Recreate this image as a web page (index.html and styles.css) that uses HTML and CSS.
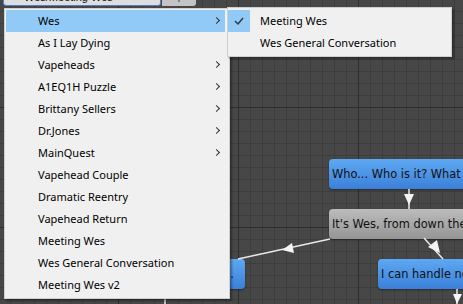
FILE: index.html
```html
<!DOCTYPE html>
<html lang="en">
<head>
    <meta charset="UTF-8">
    <title>Dialogue Graph</title>
    <link rel="stylesheet" href="styles.css">
</head>
<body>
    <div class="graph">
        <!-- nodes sit on the free canvas -->
        <div class="node node-blue" style="left: 329px; top: 159px; width: 240px;">Who... Who is it? What are you doing here?</div>
        <div class="node node-gray" style="left: 329px; top: 209px; width: 240px;">It's Wes, from down the hall.</div>
        <div class="node node-blue" style="left: 378px; top: 259px; width: 200px;">I can handle nothing.</div>
        <div class="node node-blue node-left" style="left: 110px; top: 259px; width: 135px;">Oh, hi Wes...</div>

        <svg class="edges" width="463" height="304" viewBox="0 0 463 304">
            <line x1="409" y1="189" x2="409" y2="209"/>
            <polygon points="404,194 414,194 409,205"/>
            <line x1="424" y1="238" x2="443" y2="259"/>
            <polygon points="428,247 437,240 440,253"/>
            <line x1="330" y1="239" x2="238" y2="259"/>
            <polygon points="292,243 294,253 282,250"/>
            <line x1="457" y1="289" x2="457" y2="304"/>
            <polygon points="453,294 462,294 457,304"/>
            <line x1="165" y1="296" x2="165" y2="304"/>
        </svg>

        <div class="toolbar">
            <div class="path-field">Wes/Meeting Wes <span class="caret">&#9662;</span></div>
            <div class="tool-btn">|</div>
        </div>

        <ul class="menu">
            <li class="menu-item active">Wes<span class="chev"></span></li>
            <li class="menu-item">As I Lay Dying</li>
            <li class="menu-item">Vapeheads<span class="chev"></span></li>
            <li class="menu-item">A1EQ1H Puzzle<span class="chev"></span></li>
            <li class="menu-item">Brittany Sellers<span class="chev"></span></li>
            <li class="menu-item">Dr.Jones<span class="chev"></span></li>
            <li class="menu-item">MainQuest<span class="chev"></span></li>
            <li class="menu-item">Vapehead Couple</li>
            <li class="menu-item">Dramatic Reentry</li>
            <li class="menu-item">Vapehead Return</li>
            <li class="menu-item">Meeting Wes</li>
            <li class="menu-item">Wes General Conversation</li>
            <li class="menu-item">Meeting Wes v2</li>
        </ul>

        <ul class="menu submenu">
            <li class="menu-item checked">
                <span class="check">
                    <svg width="22" height="22" viewBox="0 0 22 22"><path d="M7 11 L10 14 L15 8"/></svg>
                </span>
                Meeting Wes
            </li>
            <li class="menu-item">Wes General Conversation</li>
        </ul>
    </div>
</body>
</html>
```

FILE: styles.css
```css
body {
    margin: 0;
    padding: 0;
    overflow: hidden;
}
.graph {
    position: relative;
    width: 463px;
    height: 304px;
    overflow: hidden;
    background-color: #474747;
    background-image:
        linear-gradient(90deg, #2e2e2e 1px, transparent 1px),
        linear-gradient(0deg, #2e2e2e 1px, transparent 1px),
        linear-gradient(90deg, #3d3d3d 1px, transparent 1px),
        linear-gradient(0deg, #3d3d3d 1px, transparent 1px);
    background-size: 120px 120px, 120px 120px, 12px 12px, 12px 12px;
    background-position: 118px 0, 0 108px, 10px 0, 0 0;
    font-family: "DejaVu Sans", sans-serif;
}

/* graph nodes */
.node {
    position: absolute;
    height: 30px;
    box-sizing: border-box;
    padding: 0 3px;
    border-radius: 4px;
    font-size: 11.4px;
    line-height: 30px;
    color: #111;
    white-space: nowrap;
    overflow: hidden;
    box-shadow: 0 1px 2px rgba(0,0,0,0.4);
}
.node-blue {
    background: linear-gradient(#5ea8f2, #3b80d9);
}
.node-gray {
    background: linear-gradient(#bcbcbc, #959595);
}
.node-left {
    text-align: right;
    padding-right: 11px;
}
.edges {
    position: absolute;
    left: 0;
    top: 0;
}
.edges line {
    stroke: #e8e8e8;
    stroke-width: 1.5;
}
.edges polygon {
    fill: #f4f4f4;
}

/* editor toolbar, scrolled mostly out of view */
.toolbar {
    position: absolute;
    left: 3px;
    top: -12px;
    display: flex;
    height: 18px;
}
.path-field {
    width: 158px;
    box-sizing: border-box;
    border: 1px solid #4a7fd6;
    border-radius: 3px;
    background: #dedede;
    font-family: "Liberation Sans", sans-serif;
    font-size: 11px;
    line-height: 16px;
    padding: 0 6px 0 20px;
    color: #111;
    display: flex;
    justify-content: space-between;
}
.caret {
    font-size: 8px;
}
.tool-btn {
    width: 34px;
    margin-left: 1px;
    background: #c4c4c4;
    border-radius: 0 3px 3px 0;
    font-family: "Liberation Sans", sans-serif;
    font-size: 11px;
    line-height: 17px;
    text-align: center;
    color: #333;
}

/* popup menus */
.menu {
    position: absolute;
    left: 4px;
    top: 8px;
    width: 226px;
    box-sizing: border-box;
    margin: 0;
    padding: 1px 0 2px 0;
    list-style: none;
    background: #f0f0f0;
    border: 1px solid #cfcfcf;
    box-shadow: 2px 2px 2px rgba(0,0,0,0.35);
    font-family: "Noto Sans", "Open Sans", sans-serif;
    font-size: 11px;
    color: #000;
}
.menu-item {
    position: relative;
    height: 22px;
    line-height: 22px;
    margin: 0 4px 0 1px;
    padding-left: 32px;
}
.menu-item.active {
    background: #91c9f7;
}
.chev {
    position: absolute;
    right: 6px;
    top: 8px;
    width: 4px;
    height: 4px;
    border-top: 1px solid #333;
    border-right: 1px solid #333;
    transform: rotate(45deg);
}
.submenu {
    left: 227px;
    top: 7px;
    width: 225px;
    padding-top: 2px;
}
.submenu .menu-item {
    margin-left: 0;
    padding-left: 32px;
}
.check {
    position: absolute;
    left: 0;
    top: 0;
    width: 22px;
    height: 22px;
    background: #91c9f7;
}
.check svg path {
    fill: none;
    stroke: #333;
    stroke-width: 1.4;
}
```
